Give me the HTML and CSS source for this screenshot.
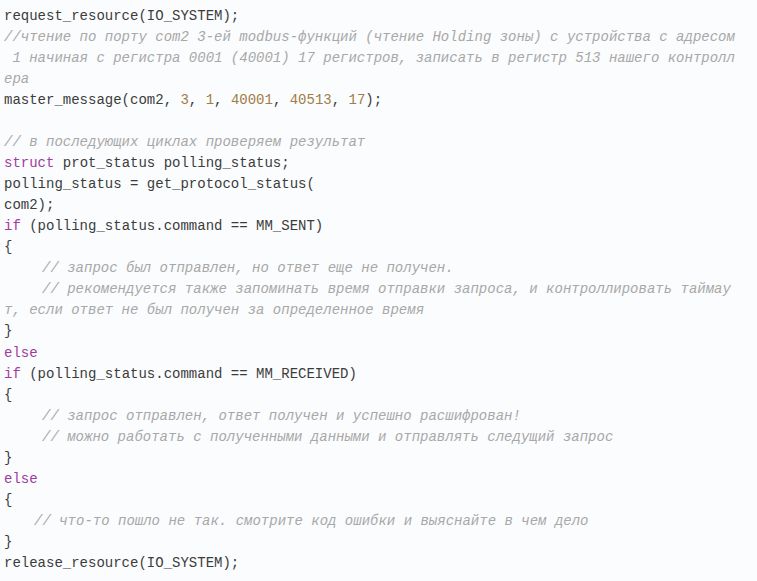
FILE: index.html
```html
<!DOCTYPE html>
<html lang="ru">
<head>
<meta charset="utf-8">
<title>Code</title>
<link rel="stylesheet" href="styles.css">
</head>
<body>
<div class="code">
<div class="ln">request_resource(IO_SYSTEM);</div>
<div class="ln c">//чтение по порту com2 3-ей modbus-функций (чтение Holding зоны) с устройства с адресом</div>
<div class="ln c"> 1 начиная с регистра 0001 (40001) 17 регистров, записать в регистр 513 нашего контролл</div>
<div class="ln c">ера</div>
<div class="ln">master_message(com2, <span class="n">3</span>, <span class="n">1</span>, <span class="n">40001</span>, <span class="n">40513</span>, <span class="n">17</span>);</div>
<div class="ln"> </div>
<div class="ln c">// в последующих циклах проверяем результат</div>
<div class="ln"><span class="k">struct</span> prot_status polling_status;</div>
<div class="ln">polling_status = get_protocol_status(</div>
<div class="ln">com2);</div>
<div class="ln"><span class="k">if</span> (polling_status.command == MM_SENT)</div>
<div class="ln">{</div>
<div class="ln c in5">// запрос был отправлен, но ответ еще не получен.</div>
<div class="ln c in5">// рекомендуется также запоминать время отправки запроса, и контроллировать таймау</div>
<div class="ln c">т, если ответ не был получен за определенное время</div>
<div class="ln">}</div>
<div class="ln"><span class="k">else</span></div>
<div class="ln"><span class="k">if</span> (polling_status.command == MM_RECEIVED)</div>
<div class="ln">{</div>
<div class="ln c in5">// запрос отправлен, ответ получен и успешно расшифрован!</div>
<div class="ln c in5">// можно работать с полученными данными и отправлять следущий запрос</div>
<div class="ln">}</div>
<div class="ln"><span class="k">else</span></div>
<div class="ln">{</div>
<div class="ln c in4">// что-то пошло не так. смотрите код ошибки и выяснайте в чем дело</div>
<div class="ln">}</div>
<div class="ln">release_resource(IO_SYSTEM);</div>
</div>
</body>
</html>
```
FILE: styles.css
```css
html, body {
  margin: 0;
  padding: 0;
  background: #fbfcfd;
}
.code {
  font-family: "Liberation Mono", "Courier New", monospace;
  font-size: 14px;
  line-height: 21px;
  color: #3c3c3c;
  padding: 6px 4px 0 4px;
}
.ln {
  white-space: pre;
  height: 21.04px;
}
.c {
  color: #a8a8a8;
  font-style: italic;
}
.k {
  color: #a03ca0;
}
.n {
  color: #a07c48;
}
.in5 {
  padding-left: 38px;
}
.in4 {
  padding-left: 30px;
}
```
